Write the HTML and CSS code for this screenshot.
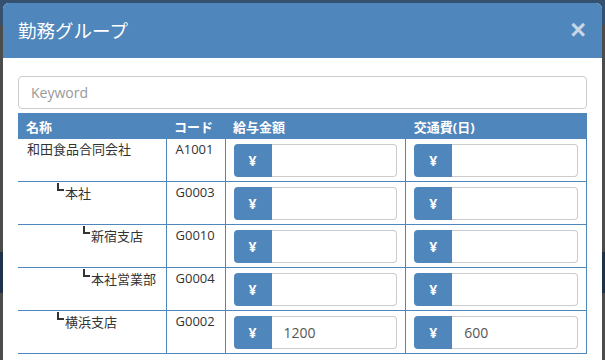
FILE: index.html
```html
<!DOCTYPE html>
<html lang="ja">
  <head>
    <meta charset="UTF-8" />
    <meta name="viewport" content="width=device-width, initial-scale=1.0" />
    <title>勤務グループ</title>

    <link rel="stylesheet" href="styles.css">
  </head>
  <body>
    <div class="modal">
      <div class="modal-header">
        <h2>勤務グループ</h2>
        <button class="close">&times;</button>
      </div>

      <div class="modal-body">
        <input class="search" type="text" placeholder="Keyword" />

        <table class="group-table">
          <thead>
            <tr>
              <th class="col-name">名称</th>
              <th class="col-code">コード</th>
              <th class="col-money">給与金額</th>
              <th class="col-money">交通費(日)</th>
            </tr>
          </thead>
          <tbody>
            <tr>
              <td class="label">和田食品合同会社</td>
              <td class="label">A1001</td>
              <td><div class="money"><span class="yen">¥</span><input type="text" value="" /></div></td>
              <td><div class="money"><span class="yen">¥</span><input type="text" value="" /></div></td>
            </tr>
            <tr>
              <td class="label level-1"><span class="branch"></span>本社</td>
              <td class="label">G0003</td>
              <td><div class="money"><span class="yen">¥</span><input type="text" value="" /></div></td>
              <td><div class="money"><span class="yen">¥</span><input type="text" value="" /></div></td>
            </tr>
            <tr>
              <td class="label level-2"><span class="branch"></span>新宿支店</td>
              <td class="label">G0010</td>
              <td><div class="money"><span class="yen">¥</span><input type="text" value="" /></div></td>
              <td><div class="money"><span class="yen">¥</span><input type="text" value="" /></div></td>
            </tr>
            <tr>
              <td class="label level-2"><span class="branch"></span>本社営業部</td>
              <td class="label">G0004</td>
              <td><div class="money"><span class="yen">¥</span><input type="text" value="" /></div></td>
              <td><div class="money"><span class="yen">¥</span><input type="text" value="" /></div></td>
            </tr>
            <tr>
              <td class="label level-1"><span class="branch"></span>横浜支店</td>
              <td class="label">G0002</td>
              <td><div class="money"><span class="yen">¥</span><input type="text" value="1200" /></div></td>
              <td><div class="money"><span class="yen">¥</span><input type="text" value="600" /></div></td>
            </tr>
          </tbody>
        </table>
      </div>
    </div>
  </body>
</html>
```

FILE: styles.css
```css
html,
body {
  height: 360px;
  overflow: hidden;
}

body {
  margin: 0;
  font-family: "Open Sans", "Noto Sans CJK JP", sans-serif;
  color: #333;
  background: linear-gradient(
    to bottom,
    #34516f 0 25px,
    #4c4c4c 25px 252px,
    #1e3249 252px 293px,
    #4c4c4c 293px
  );
}

.modal {
  margin: 3px 3px 0;
  height: 400px;
  background-color: white;
  border-radius: 6px 6px 0 0;
  overflow: hidden;
}

.modal-header {
  display: flex;
  justify-content: space-between;
  align-items: center;
  height: 55px;
  padding: 0 16px 0 15px;
  background-color: #4f86bb;
}

.modal-header h2 {
  margin: -2px 0 0;
  font-family: "Noto Sans CJK JP", sans-serif;
  font-size: 18.5px;
  font-weight: normal;
  color: white;
}

.close {
  padding: 0;
  border: none;
  background: none;
  font-family: "Liberation Sans", sans-serif;
  font-size: 27px;
  font-weight: bold;
  line-height: 1;
  color: #c6d6e7;
  cursor: pointer;
}

.modal-body {
  padding: 18px 15px 0;
}

.search {
  display: block;
  box-sizing: border-box;
  width: 100%;
  height: 33px;
  padding: 0 12px;
  border: 1px solid #ccc;
  border-radius: 4px;
  font-family: "Open Sans", sans-serif;
  font-size: 14px;
  color: #555;
}

.search::placeholder {
  color: #999;
}

.group-table {
  width: 100%;
  margin-top: 4px;
  border-collapse: collapse;
  table-layout: fixed;
  font-size: 13px;
}

.group-table th {
  height: 26px;
  padding: 0 8px;
  background-color: #4f86bb;
  color: white;
  font-size: 13px;
  font-weight: bold;
  text-align: left;
}

.col-name {
  width: 132px;
}

.col-code {
  width: 43px;
}

.group-table td {
  padding: 5px 8px 4px;
  vertical-align: top;
  border-left: 1px solid #4f86bb;
  border-bottom: 1px solid #4f86bb;
  line-height: 18px;
}

.group-table td:first-child {
  border-left: none;
  padding-left: 9px;
}

.group-table td:last-child {
  border-right: 1px solid #4f86bb;
}

.group-table td.label {
  padding-top: 1px;
  padding-left: 9px;
}

.level-1 {
  text-indent: 30px;
}

.level-2 {
  text-indent: 56px;
}

.branch {
  display: inline-block;
  width: 5px;
  height: 6px;
  margin-right: 1px;
  vertical-align: 7px;
  border-left: 2px solid #333;
  border-bottom: 2px solid #333;
}

.money {
  display: flex;
  height: 33px;
}

.yen {
  display: flex;
  align-items: center;
  justify-content: center;
  width: 38px;
  flex-shrink: 0;
  background-color: #4f86bb;
  border-radius: 4px 0 0 4px;
  color: white;
  font-size: 14px;
  font-weight: bold;
}

.money input {
  flex: 1;
  min-width: 0;
  box-sizing: border-box;
  padding: 0 12px;
  border: 1px solid #ccc;
  border-left: none;
  border-radius: 0 4px 4px 0;
  font-family: "Open Sans", sans-serif;
  font-size: 14px;
  color: #555;
}
```
